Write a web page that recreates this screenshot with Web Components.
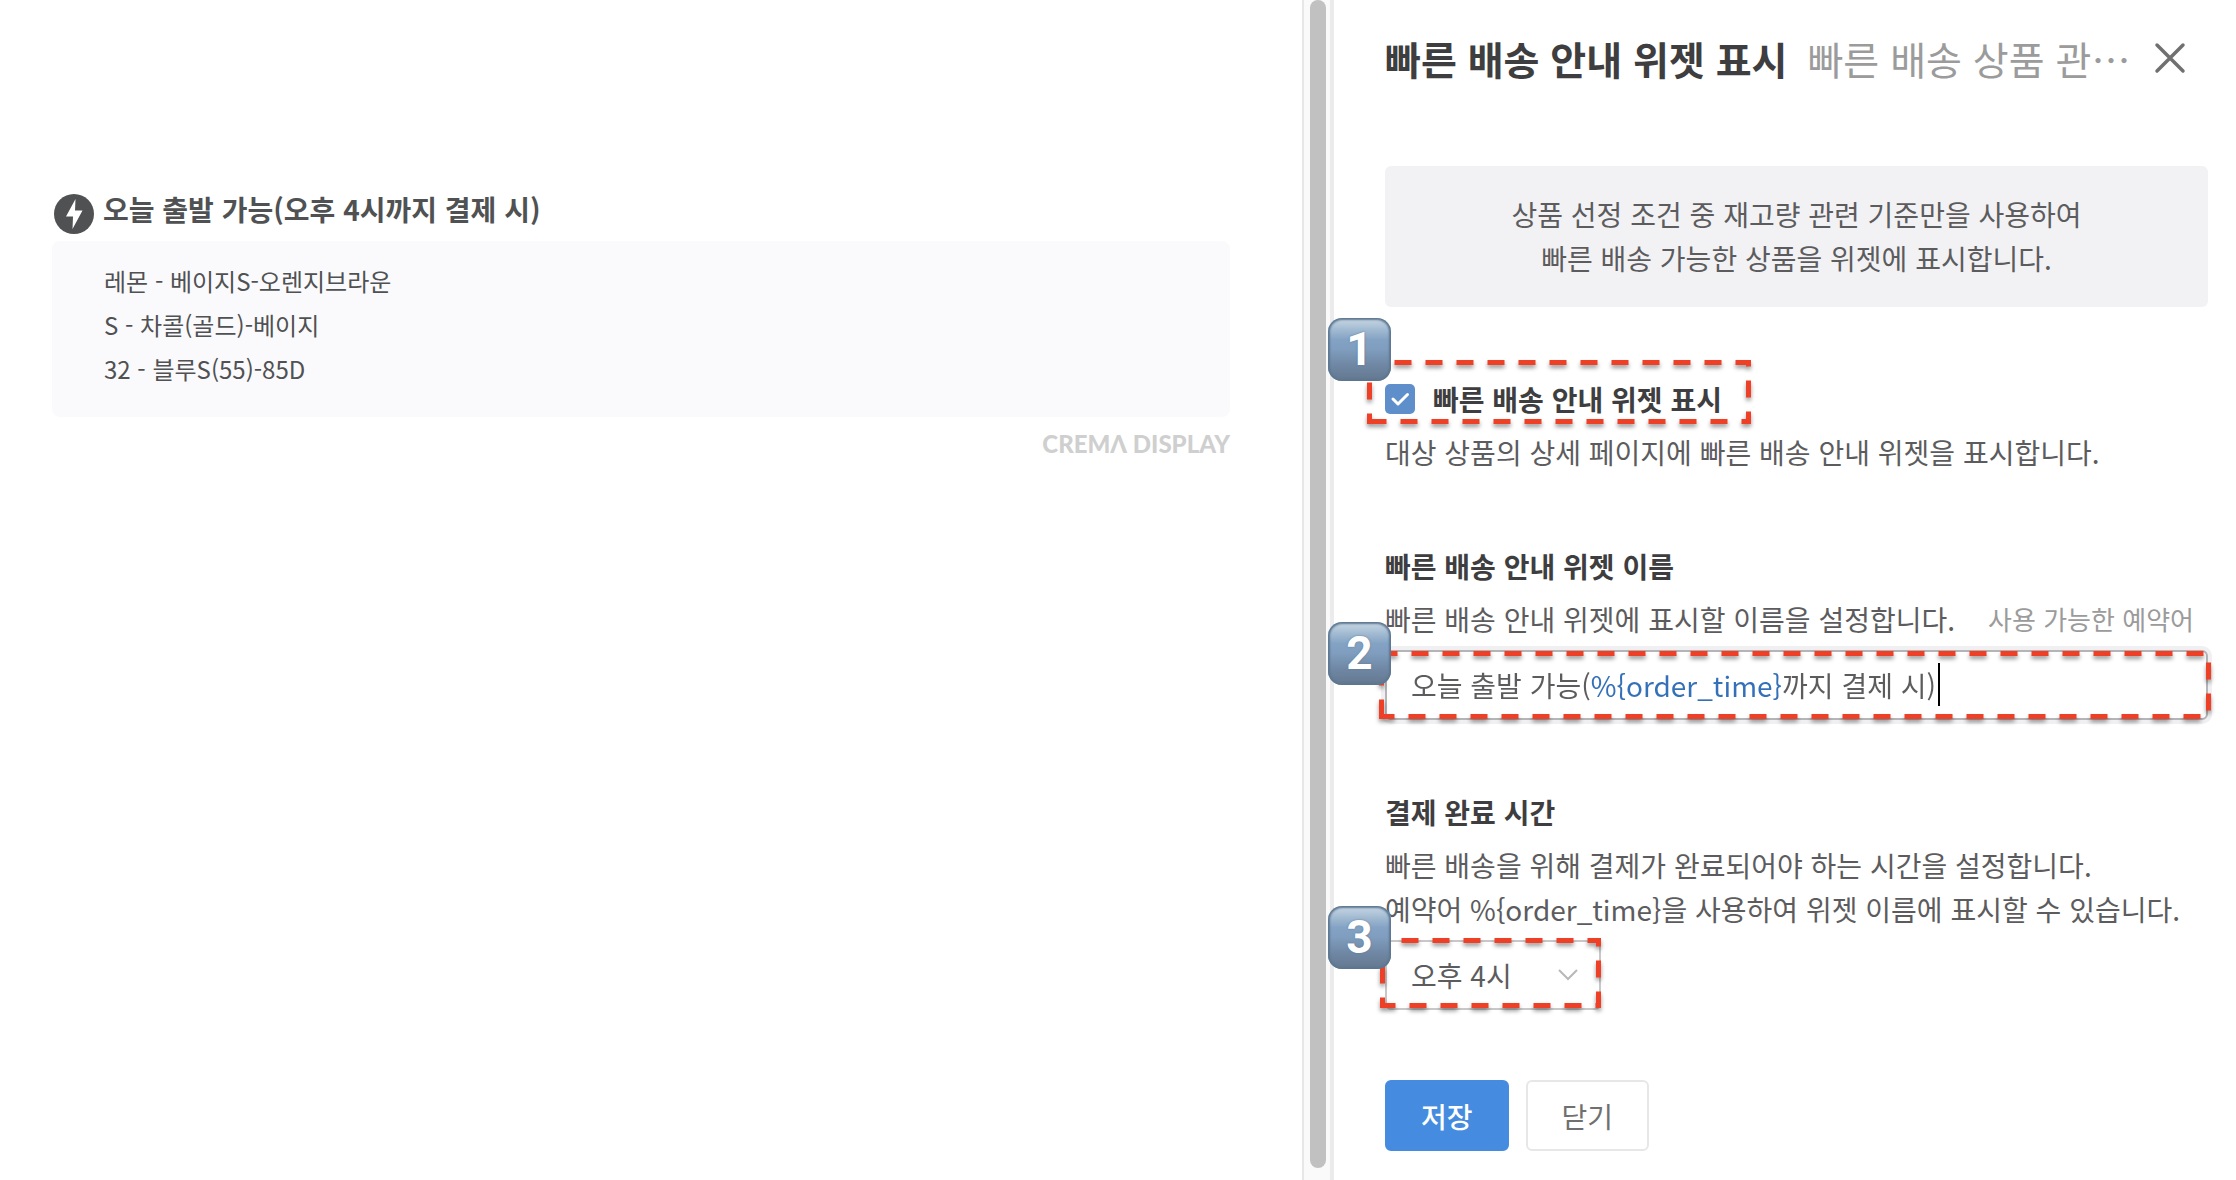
<!DOCTYPE html>
<html lang="ko">
<head>
<meta charset="UTF-8">
<meta name="viewport" content="width=device-width, initial-scale=1">
<title>빠른 배송 안내 위젯 표시</title>
<style>
    body {
        margin: 0;
        background-color: #fff;
        font-family: "Noto Sans CJK KR", sans-serif;
        font-size: 28px;
        line-height: 44px;
        color: #5c5c5e;
    }
</style>
</head>
<body>
<widget-editor>
    <delivery-preview slot="preview" heading="오늘 출발 가능(오후 4시까지 결제 시)">
        <li>레몬 - 베이지S-오렌지브라운</li>
        <li>S - 차콜(골드)-베이지</li>
        <li>32 - 블루S(55)-85D</li>
    </delivery-preview>

    <panel-header slot="panel" heading="빠른 배송 안내 위젯 표시">빠른 배송 상품 관…</panel-header>
    <notice-box slot="panel">상품 선정 조건 중 재고량 관련 기준만을 사용하여<br>빠른 배송 가능한 상품을 위젯에 표시합니다.</notice-box>

    <setting-section slot="panel">
        <step-mark slot="heading" class="toggle" number="1" phase="9">
            <check-option label="빠른 배송 안내 위젯 표시"></check-option>
        </step-mark>
        대상 상품의 상세 페이지에 빠른 배송 안내 위젯을 표시합니다.
    </setting-section>

    <setting-section slot="panel" heading="빠른 배송 안내 위젯 이름" link="사용 가능한 예약어">
        빠른 배송 안내 위젯에 표시할 이름을 설정합니다.
        <step-mark slot="control" class="name" number="2" phase="0">
            <token-input label="빠른 배송 안내 위젯 이름" value="오늘 출발 가능(%{order_time}까지 결제 시)"></token-input>
        </step-mark>
    </setting-section>

    <setting-section slot="panel" heading="결제 완료 시간">
        빠른 배송을 위해 결제가 완료되어야 하는 시간을 설정합니다.<br>예약어 %{order_time}을 사용하여 위젯 이름에 표시할 수 있습니다.
        <step-mark slot="control" class="time" number="3" phase="9">
            <time-select label="결제 완료 시간" value="오후 4시"></time-select>
        </step-mark>
    </setting-section>

    <panel-actions slot="panel"></panel-actions>
</widget-editor>

<script>
// Layout: preview on the left, scrollbar, settings panel on the right
class WidgetEditor extends HTMLElement {
    constructor() {
        super();
        this.attachShadow({ mode: 'open' });
        this.shadowRoot.innerHTML = `
            <style>
                :host {
                    display: grid;
                    grid-template-columns: minmax(0, 1fr) 28px minmax(0, 906px);
                    min-height: 100vh;
                }
                main {
                    padding: 187px 72px 40px 52px;
                }
                .scrollbar {
                    display: flex;
                    box-sizing: border-box;
                    padding: 0 4px 12px 6px;
                    background-color: #fafafa;
                    border-left: 2px solid #e7e7e7;
                }
                .thumb {
                    flex: 1;
                    background-color: #c1c1c1;
                    border-radius: 8px;
                }
                aside {
                    border-left: 4px solid #ebebeb;
                    padding: 0 28px 28px 51px;
                }
            </style>
            <main><slot name="preview"></slot></main>
            <div class="scrollbar"><div class="thumb"></div></div>
            <aside><slot name="panel"></slot></aside>
        `;
    }
}
customElements.define('widget-editor', WidgetEditor);

class DeliveryPreview extends HTMLElement {
    constructor() {
        super();
        this.attachShadow({ mode: 'open' });
        this.shadowRoot.innerHTML = `
            <style>
                :host {
                    display: block;
                    color: #505153;
                }
                header {
                    display: flex;
                    align-items: flex-start;
                    gap: 9px;
                    padding: 0 2px 3px;
                }
                header svg {
                    width: 40px;
                    height: 40px;
                    margin-top: 7px;
                }
                h2 {
                    margin: 0;
                    font-size: 28px;
                    line-height: 44px;
                }
                ul {
                    list-style: none;
                    margin: 4px 0 17px;
                    padding: 18px 52px 26px;
                    font-size: 24px;
                    background-color: #fafafc;
                    border-radius: 8px;
                }
                .brand {
                    font-family: Lato, "DejaVu Sans", sans-serif;
                    font-size: 24px;
                    font-weight: 900;
                    line-height: 20px;
                    text-align: right;
                    color: #cfcfcf;
                }
            </style>
            <header>
                <svg viewBox="0 0 40 40" aria-hidden="true">
                    <circle cx="20" cy="20" r="20" fill="#505153"/>
                    <path d="M21.500 5 L12 22.500 L19 22.500 L18.500 35 L28.500 16.500 L21 16.500 Z" fill="#fff"/>
                </svg>
                <h2></h2>
            </header>
            <ul><slot></slot></ul>
            <div class="brand">CREMΛ DISPLAY</div>
        `;
    }

    connectedCallback() {
        this.shadowRoot.querySelector('h2').textContent = this.getAttribute('heading');
    }
}
customElements.define('delivery-preview', DeliveryPreview);

class PanelHeader extends HTMLElement {
    constructor() {
        super();
        this.attachShadow({ mode: 'open' });
        this.shadowRoot.innerHTML = `
            <style>
                :host {
                    display: flex;
                    align-items: center;
                    gap: 20px;
                    height: 116px;
                    margin-bottom: 50px;
                    font-size: 39px;
                    line-height: 60px;
                    white-space: nowrap;
                }
                h1 {
                    margin: 0;
                    font-size: 39px;
                    color: #3e3e40;
                }
                .sub {
                    flex: 1;
                    overflow: hidden;
                    text-overflow: ellipsis;
                    color: #9b9b9b;
                }
                button {
                    display: flex;
                    padding: 0;
                    margin-right: 22px;
                    border: 0;
                    background: none;
                    cursor: pointer;
                }
                svg {
                    width: 32px;
                    height: 32px;
                }
            </style>
            <h1></h1>
            <span class="sub"><slot></slot></span>
            <button type="button" aria-label="닫기">
                <svg viewBox="0 0 32 32" fill="none" stroke="#707070" stroke-width="3.500" stroke-linecap="round">
                    <path d="M3 3 L29 29 M29 3 L3 29"/>
                </svg>
            </button>
        `;
    }

    connectedCallback() {
        this.shadowRoot.querySelector('h1').textContent = this.getAttribute('heading');
    }
}
customElements.define('panel-header', PanelHeader);

class NoticeBox extends HTMLElement {
    constructor() {
        super();
        this.attachShadow({ mode: 'open' });
        this.shadowRoot.innerHTML = `
            <style>
                :host {
                    display: block;
                    padding: 26px 26px 27px;
                    text-align: center;
                    background-color: #f2f2f4;
                    border-radius: 6px;
                }
            </style>
            <slot></slot>
        `;
    }
}
customElements.define('notice-box', NoticeBox);

// Heading, description and the control under them
class SettingSection extends HTMLElement {
    constructor() {
        super();
        this.attachShadow({ mode: 'open' });
        this.shadowRoot.innerHTML = `
            <style>
                :host {
                    display: flex;
                    flex-direction: column;
                    gap: 9px;
                    margin-top: 70px;
                }
                h3 {
                    margin: 0;
                    font-size: 28px;
                    color: #3e3e40;
                }
                .desc {
                    display: flex;
                    justify-content: space-between;
                    white-space: nowrap;
                }
                a {
                    margin-right: 14px;
                    font-size: 26px;
                    color: #9b9b9b;
                    text-decoration: none;
                }
            </style>
            <slot name="heading"><h3></h3></slot>
            <div class="desc"><div><slot></slot></div></div>
            <slot name="control"></slot>
        `;
    }

    connectedCallback() {
        this.shadowRoot.querySelector('h3').textContent = this.getAttribute('heading') || '';
        if (this.hasAttribute('link')) {
            const link = document.createElement('a');
            link.href = '#';
            link.textContent = this.getAttribute('link');
            this.shadowRoot.querySelector('.desc').append(link);
        }
    }
}
customElements.define('setting-section', SettingSection);

// Dashed frame with a numbered badge, drawn over the control it wraps
class StepMark extends HTMLElement {
    constructor() {
        super();
        this.attachShadow({ mode: 'open' });
        this.shadowRoot.innerHTML = `
            <style>
                :host {
                    display: block;
                    position: relative;
                    --frame: 1px -3px 1px -6px;
                    --badge-top: -28px;
                }
                :host(.toggle) {
                    align-self: flex-start;
                    --frame: -17px -29px -3px -18px;
                    --badge-top: -59px;
                }
                :host(.time) {
                    align-self: flex-start;
                    --frame: -2px 0 2px -5px;
                    --badge-top: -34px;
                }
                .frame {
                    position: absolute;
                    inset: var(--frame);
                    pointer-events: none;
                }
                svg {
                    display: block;
                    position: absolute;
                    overflow: visible;
                    filter: drop-shadow(0 3px 2px rgba(0, 0, 0, 0.4));
                }
                .badge {
                    position: absolute;
                    top: var(--badge-top);
                    left: -57px;
                    box-sizing: border-box;
                    width: 63px;
                    height: 63px;
                    border-radius: 14px;
                    background: linear-gradient(#c9d8e5, #a3bbd2 18%, #84a3c4 34%, #7f9dbe 50%, #6f87a4 75%, #64788f);
                    box-shadow: inset 0 0 2px 2px #5d7791;
                    font: 700 46px/63px Roboto, sans-serif;
                    text-align: center;
                    color: #fff;
                    text-shadow: 0 0 2px #5d7791;
                }
            </style>
            <slot></slot>
            <div class="frame">
                <svg><path fill="none" stroke="#ee4026" stroke-width="5" stroke-dasharray="17 14"/></svg>
            </div>
            <div class="badge"></div>
        `;
    }

    connectedCallback() {
        this.shadowRoot.querySelector('.badge').textContent = this.getAttribute('number');
        const frame = this.shadowRoot.querySelector('.frame');
        new ResizeObserver(() => this.draw(frame)).observe(frame);
        this.draw(frame);
    }

    draw(frame) {
        const w = frame.clientWidth;
        const h = frame.clientHeight;
        const svg = frame.querySelector('svg');
        const path = frame.querySelector('path');
        svg.setAttribute('width', w);
        svg.setAttribute('height', h);
        path.setAttribute('d', `M2.5 ${h - 2.5} V2.5 H${w - 2.5} V${h - 2.5} Z`);
        path.setAttribute('stroke-dashoffset', this.getAttribute('phase'));
    }
}
customElements.define('step-mark', StepMark);

class CheckOption extends HTMLElement {
    constructor() {
        super();
        this.attachShadow({ mode: 'open' });
        this.shadowRoot.innerHTML = `
            <style>
                :host {
                    display: block;
                }
                label {
                    display: flex;
                    align-items: center;
                    gap: 18px;
                    font-weight: 700;
                    color: #3e3e40;
                    cursor: pointer;
                }
                .box {
                    display: grid;
                }
                input, svg {
                    grid-area: 1 / 1;
                    width: 30px;
                    height: 30px;
                    margin: 0;
                }
                input {
                    appearance: none;
                    border-radius: 5px;
                    border: 2px solid #c8c8c8;
                }
                input:checked {
                    border: 0;
                    background-color: #5f8fcb;
                }
                input:not(:checked) + svg {
                    display: none;
                }
                svg {
                    pointer-events: none;
                    z-index: 1;
                }
            </style>
            <label for="check">
                <span class="box">
                    <input type="checkbox" id="check" checked>
                    <svg viewBox="0 0 30 30" fill="none" stroke="#fff" stroke-width="3" stroke-linecap="round" stroke-linejoin="round">
                        <path d="M8 15 L13 20 L22.500 10.500"/>
                    </svg>
                </span>
                <span class="text"></span>
            </label>
        `;
    }

    connectedCallback() {
        this.shadowRoot.querySelector('.text').textContent = this.getAttribute('label');
    }
}
customElements.define('check-option', CheckOption);

// Text box that colours the %{...} token in its value
class TokenInput extends HTMLElement {
    constructor() {
        super();
        this.attachShadow({ mode: 'open' });
        this.shadowRoot.innerHTML = `
            <style>
                :host {
                    display: block;
                    position: relative;
                    box-sizing: border-box;
                    height: 70px;
                    border: 2px solid #b5b5b8;
                    border-radius: 6px;
                    box-shadow: 0 0 0 4px #f0f0f2;
                    background-color: #fff;
                }
                input {
                    box-sizing: border-box;
                    width: 100%;
                    height: 66px;
                    margin: 0;
                    padding: 0 24px;
                    border: 0;
                    outline: 0;
                    font: inherit;
                    color: transparent;
                    background: linear-gradient(90deg, #5c5c5e var(--from, 0), #3470b8 var(--from, 0), #3470b8 var(--to, 0), #5c5c5e var(--to, 0));
                    -webkit-background-clip: text;
                    background-clip: text;
                    caret-color: #000;
                }
                .ruler {
                    position: absolute;
                    visibility: hidden;
                    white-space: pre;
                }
                .caret {
                    position: absolute;
                    top: 11px;
                    left: var(--end);
                    width: 2px;
                    height: 43px;
                    background-color: #000;
                }
                input:focus + .caret {
                    display: none;
                }
            </style>
            <input type="text">
            <span class="caret"></span>
        `;
    }

    connectedCallback() {
        this.input = this.shadowRoot.querySelector('input');
        this.input.value = this.getAttribute('value');
        this.input.setAttribute('aria-label', this.getAttribute('label'));
        this.input.addEventListener('input', () => this.paint());
        this.paint();
    }

    paint() {
        const value = this.input.value;
        const ruler = document.createElement('span');
        ruler.className = 'ruler';
        this.shadowRoot.append(ruler);
        const at = (n) => {
            ruler.textContent = value.slice(0, n);
            return 24 + Math.ceil(ruler.getBoundingClientRect().width);
        };
        const token = value.match(/%\{\w+\}/);
        this.style.setProperty('--from', token ? at(token.index) + 'px' : '0');
        this.style.setProperty('--to', token ? at(token.index + token[0].length) + 'px' : '0');
        this.style.setProperty('--end', at(value.length) + 2 + 'px');
        ruler.remove();
    }
}
customElements.define('token-input', TokenInput);

class TimeSelect extends HTMLElement {
    constructor() {
        super();
        this.attachShadow({ mode: 'open' });
        this.shadowRoot.innerHTML = `
            <style>
                :host {
                    display: grid;
                    align-items: center;
                    min-width: 216px;
                }
                select, svg {
                    grid-area: 1 / 1;
                }
                select {
                    appearance: none;
                    box-sizing: border-box;
                    height: 70px;
                    padding: 0 64px 0 24px;
                    border: 2px solid #c8c8c8;
                    border-radius: 6px;
                    background-color: #fff;
                    font: inherit;
                    color: inherit;
                }
                svg {
                    justify-self: end;
                    width: 20px;
                    height: 12px;
                    margin-right: 23px;
                    pointer-events: none;
                }
            </style>
            <select><option></option></select>
            <svg viewBox="0 0 20 12" fill="none" stroke="#b8b8b8" stroke-width="2">
                <path d="M1 1 L10 10 L19 1"/>
            </svg>
        `;
    }

    connectedCallback() {
        this.shadowRoot.querySelector('option').textContent = this.getAttribute('value');
        this.shadowRoot.querySelector('select').setAttribute('aria-label', this.getAttribute('label'));
    }
}
customElements.define('time-select', TimeSelect);

class PanelActions extends HTMLElement {
    constructor() {
        super();
        this.attachShadow({ mode: 'open' });
        this.shadowRoot.innerHTML = `
            <style>
                :host {
                    display: flex;
                    gap: 17px;
                    margin-top: 70px;
                }
                button {
                    box-sizing: border-box;
                    height: 71px;
                    min-width: 123px;
                    padding: 0 34px;
                    border: 2px solid #e7e7e7;
                    border-radius: 6px;
                    background-color: #fff;
                    font: inherit;
                    color: #707070;
                    cursor: pointer;
                }
                .primary {
                    border-color: #458ce0;
                    background-color: #458ce0;
                    font-weight: 500;
                    color: #fff;
                }
            </style>
            <button type="button" class="primary">저장</button>
            <button type="button">닫기</button>
        `;
    }
}
customElements.define('panel-actions', PanelActions);
</script>
</body>
</html>
